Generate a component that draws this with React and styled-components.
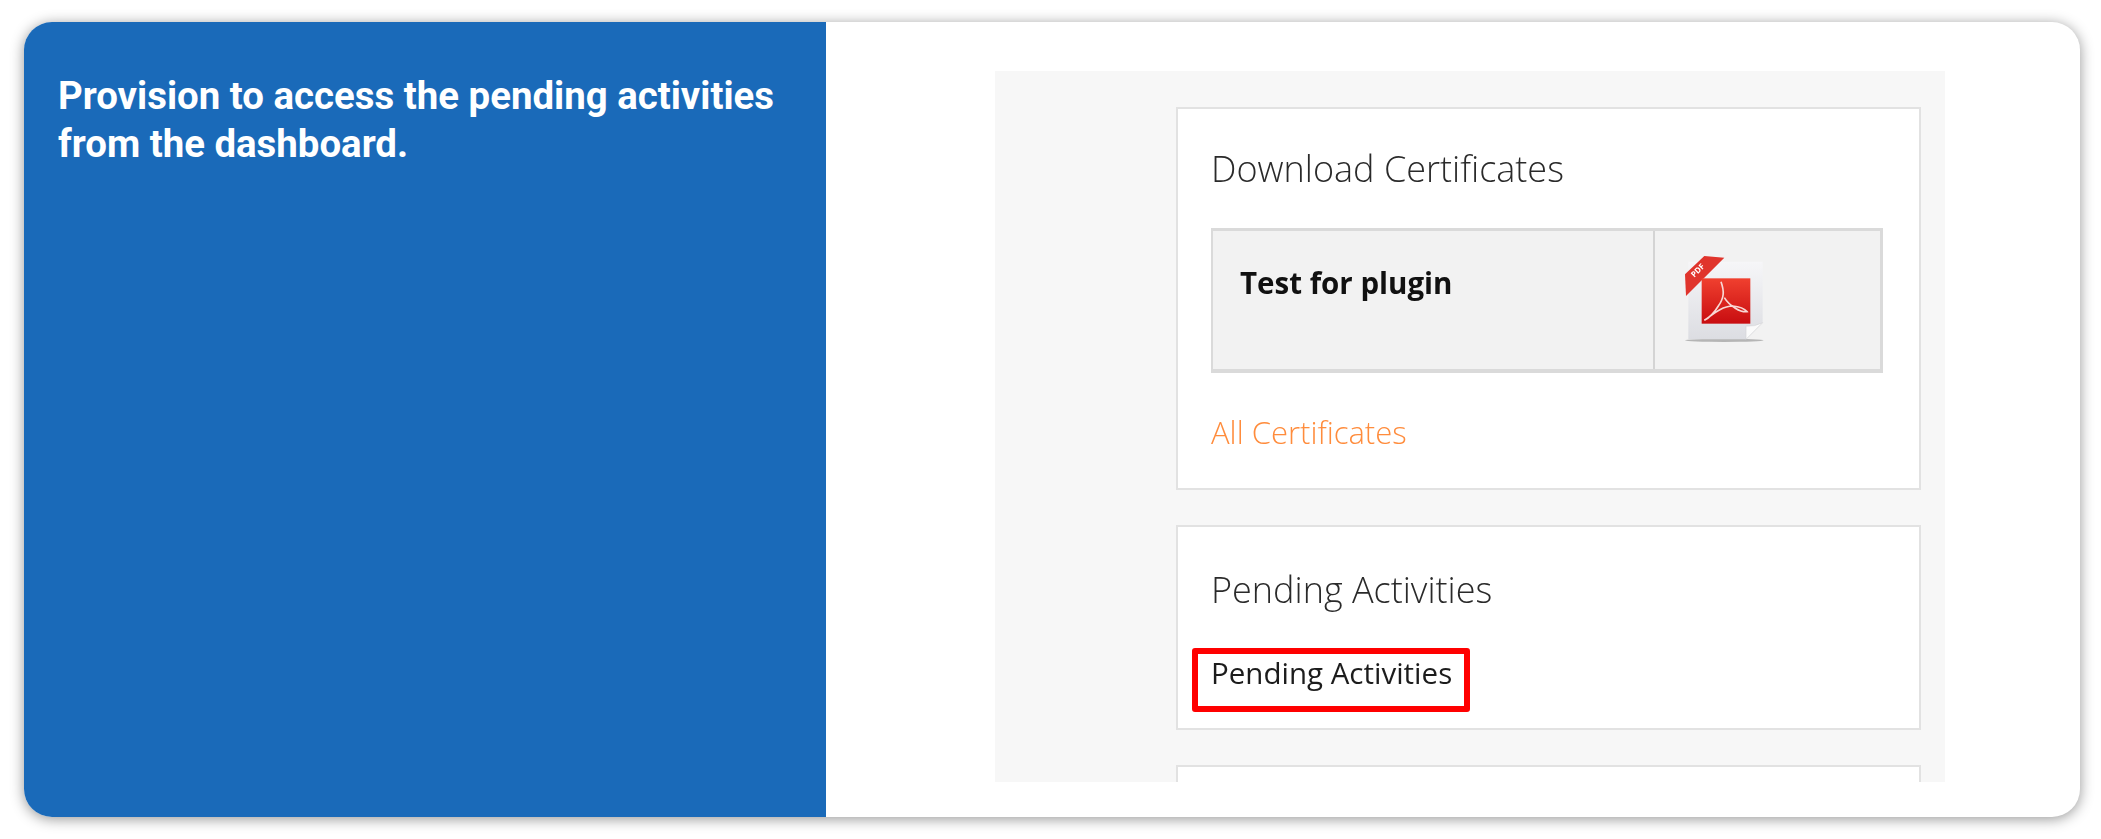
import React from 'react';
import styled, { createGlobalStyle } from 'styled-components';

const GlobalStyle = createGlobalStyle`
  html, body {
    margin: 0;
    background: #fff;
  }
  * {
    box-sizing: border-box;
  }
`;

const Page = styled.div`
  width: 2101px;
  height: 839px;
  padding: 22px 21px 22px 24px;
  overflow: hidden;
`;

const Card = styled.div`
  display: flex;
  height: 795px;
  border-radius: 28px;
  background: #fff;
  overflow: hidden;
  box-shadow: 0 2px 14px rgba(0, 0, 0, 0.42);
`;

const Side = styled.div`
  width: 802px;
  flex: none;
  padding: 50px 34px;
  background: #1a6ab9;
`;

const Title = styled.h2`
  margin: 0;
  color: #fff;
  font-family: Roboto, 'Liberation Sans', sans-serif;
  font-size: 38.4px;
  font-weight: 700;
  line-height: 48px;
`;

const Body = styled.div`
  flex: 1;
  min-width: 0;
  padding: 49px 135px 35px 169px;
`;

const Shot = styled.div`
  height: 100%;
  padding: 36px 24px 0 181px;
  display: flex;
  flex-direction: column;
  gap: 35px;
  background: #f7f7f7;
  overflow: hidden;
  font-family: 'Open Sans', 'Liberation Sans', sans-serif;
  filter: blur(0.6px);
`;

const Box = styled.section`
  position: relative;
  flex: none;
  height: ${(p) => p.$height}px;
  padding: 0 36px 0 33px;
  background: #fff;
  border: 2px solid #e2e2e2;
`;

const Heading = styled.h3`
  margin: ${(p) => p.$top}px 0 0;
  color: #2a2a2a;
  font-size: 36px;
  font-weight: 300;
  line-height: 48px;
`;

const Table = styled.div`
  display: grid;
  grid-template-columns: 442px 1fr;
  height: 145px;
  margin-top: 35px;
  background: #f2f2f2;
  border: solid #dadada;
  border-width: 3px 3px 4px 2px;
`;

const NameCell = styled.div`
  padding: 33px 0 0 27px;
  border-right: 2px solid #d4d4d4;
  color: #111;
  font-size: 29.5px;
  font-weight: 700;
  line-height: 38px;
`;

const IconCell = styled.div`
  padding: 10px 0 0 6px;
`;

const MoreLink = styled.a`
  display: block;
  margin-top: 39px;
  color: #ff8c3c;
  font-size: 31px;
  font-weight: 300;
  line-height: 40px;
`;

const PendingLink = styled.a`
  display: block;
  margin-top: 39px;
  color: #1c1c1c;
  font-size: 29.5px;
  font-weight: 400;
  line-height: 40px;
`;

const Highlight = styled.div`
  position: absolute;
  left: 14px;
  top: 121px;
  width: 278px;
  height: 64px;
  border: 6px solid #f00;
  border-radius: 3px;
`;

function PdfIcon() {
  return (
    <svg width="120" height="120" viewBox="0 0 360 360">
      <defs>
        <linearGradient id="sheet" x1="0" y1="0" x2="0" y2="1">
          <stop offset="0" stopColor="#f6f6f8" />
          <stop offset="1" stopColor="#dcdde2" />
        </linearGradient>
        <linearGradient id="red" x1="0" y1="0" x2="0" y2="1">
          <stop offset="0" stopColor="#f0402f" />
          <stop offset="1" stopColor="#c80d10" />
        </linearGradient>
      </defs>
      <ellipse cx="190" cy="298" rx="118" ry="5" fill="#b5b5b5" />
      <path d="M82 62H305V245L255 295H82Z" fill="url(#sheet)" />
      <path d="M255 295V255Q280 258 305 245Z" fill="#fbfbfb" stroke="#d5d5d8" strokeWidth="2" />
      <path d="M72 100L130 45L190 50L75 165Z" fill="#e0342c" />
      <text
        x="116"
        y="94"
        fill="#fff"
        fontFamily="Open Sans, sans-serif"
        fontSize="24"
        fontWeight="700"
        textAnchor="middle"
        transform="rotate(-45 116 94)"
      >
        PDF
      </text>
      <rect x="122" y="112" width="146" height="136" fill="url(#red)" />
      <path
        d="M180 122C190 150 190 170 172 195C160 215 145 230 130 238C150 225 180 195 215 195C235 197 252 205 258 212C240 215 205 195 190 170"
        fill="none"
        stroke="#f8d8d4"
        strokeWidth="5"
      />
    </svg>
  );
}

export default function App() {
  return (
    <>
      <GlobalStyle />
      <Page>
        <Card>
          <Side>
            <Title>
              Provision to access the pending activities
              <br />
              from the dashboard.
            </Title>
          </Side>
          <Body>
            <Shot>
              <Box $height={383}>
                <Heading $top={36}>Download Certificates</Heading>
                <Table>
                  <NameCell>Test for plugin</NameCell>
                  <IconCell>
                    <PdfIcon />
                  </IconCell>
                </Table>
                <MoreLink>All Certificates</MoreLink>
              </Box>
              <Box $height={205}>
                <Heading $top={39}>Pending Activities</Heading>
                <PendingLink>Pending Activities</PendingLink>
                <Highlight />
              </Box>
              <Box $height={120} />
            </Shot>
          </Body>
        </Card>
      </Page>
    </>
  );
}
